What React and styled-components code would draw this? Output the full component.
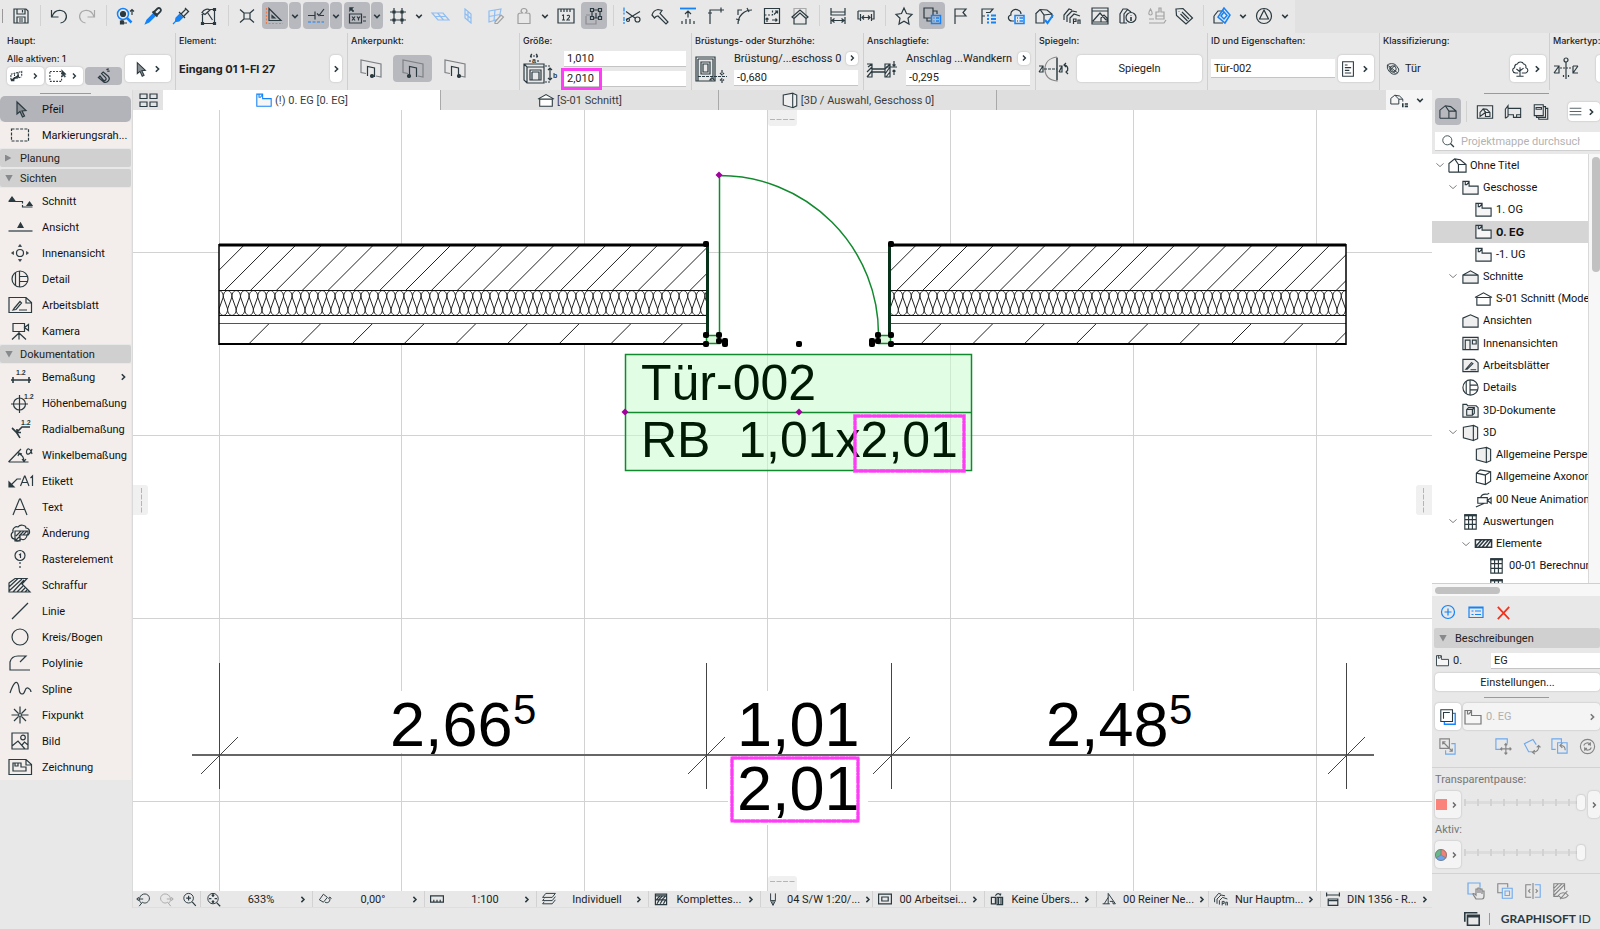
import React, { useState } from "react";
import styled, { createGlobalStyle, css } from "styled-components";

const INK = "#2b3a40";
const BLUE = "#1583f7";
const GREEN = "#118a2e";
const PINK = "#ff3df5";

const icons = {
	save: (
		<>
			<path d="M3 3h12l2 2v12H3z" />
			<path d="M6 3v5h8V3M11.500 4v2.500M6 17v-6h8v6M8 13h4M8 15h4" />
		</>
	),
	undo: <path d="M2.500 4v7h7M3 10.500C4.500 6.500 8 4 12 4.500c5 .7 7 6 4 10-1 1.400-2.500 2.200-4.500 2.500" />,
	redo: <path d="M17.500 4v7h-7M17 10.500C15.500 6.500 12 4 8 4.500c-5 .7-7 6-4 10 1 1.400 2.500 2.200 4.500 2.500" />,
	find: (
		<>
			<g stroke={BLUE} strokeWidth="1.500">
				<circle cx="8" cy="8" r="5.500" />
				<path d="m12 12 4.500 4.500" strokeWidth="2.500" />
			</g>
			<circle cx="8" cy="8" r="2.500" fill={INK} />
			<path d="M17 9V3.500M15 5.500l2-2 2 2M7 14v3h5" />
			<path d="M5.500 15h3v3h-3z" fill={INK} />
		</>
	),
	pick: (
		<>
			<path d="m11 7-7 7-1.500 3.500L6 16l7-7" fill={BLUE} stroke={BLUE} />
			<path d="m9.500 5.500 5 5M11 6l3.500-3.500c2-1.500 4.500 1 3 3L14 9z" strokeWidth="1.800" />
		</>
	),
	inject: (
		<>
			<path d="m9 8-4 4-.5 3.500L8 15l4-4M4.500 15.500 2 18" fill={BLUE} stroke={BLUE} />
			<path d="m8 6 6 6M10 8l5-5M13 10l4-4M14 2l4 4" />
		</>
	),
	modify: (
		<>
			<path d="M3.500 9v8.500h12V3.500H11M2.500 8.500h2M2.500 16.500h2v2h-2zM14.500 16.500h2v2h-2zM14.500 2.500h2v2h-2z" />
			<path d="m13.500 14-5-7.500M3 6.500C5 3 9 2.500 11 4L6 8.500z" />
		</>
	),
	gravity: <path d="M7 7h6v6H7zM3 3.500 7 7M17 3.500 13 7M3 16.500 7 13M17 16.500 13 13" />,
	ruler: (
		<>
			<path d="M4 2.500v12h12z" />
			<path d="M7 9.500v2.500h2.800z" />
			<path d="M1.500 2v15.500H18" stroke="#ee7b4a" strokeDasharray="2 1.500" />
		</>
	),
	snapline: (
		<>
			<path d="M2 9.500h7M9 5.500v8M11 7.500l2 2L18 3M14 9.500h4" />
			<path d="M2 16h16" stroke={BLUE} strokeDasharray="3 1.500" />
		</>
	),
	xy: (
		<>
			<path d="M2.500 8h12v9h-12zM16 11h3M16 15h3" />
			<path d="M5 10.500l3 4M8 10.500l-3 4M10 10.500l1.500 2 1.500-2M11.500 12.500v2" />
			<path d="M2.500 1.500h4l-1.500 1.500 2 2-1 1-2-2-1.500 1.500z" fill={INK} strokeWidth=".5" />
		</>
	),
	hash: (
		<>
			<path d="M6 2v16M14 2v16M2 6h16M2 14h16" />
			<path d="M5 5h2v2H5zM13 5h2v2h-2zM5 13h2v2H5zM13 13h2v2h-2z" fill={INK} />
		</>
	),
	plane: <path d="M2 7h11l6 7H8zM7.500 7l6 7M5 10.500h11" stroke="#8dbdf3" />,
	plane2: <path d="m7 3 6 5v9l-6-5zM10 5.500v9M7 7.500l6 5" stroke="#8dbdf3" />,
	plane3: (
		<>
			<path d="m3 5 12-2-2 10-10 3zM9 4 8 14.500M3 10.500l11-2" stroke="#8dbdf3" />
			<path d="m9 16 6-7 2.500 2-6 6.500H9z" fill="#e8e8e8" stroke="#a2a2a2" />
		</>
	),
	weight: <path d="M4 9c0-2 2-2 4.500-2L7 5.500C7 1.500 13 1.500 13 5.500L11.500 7C15 7 16 7 16 9v8.500H4z" stroke="#9d9d9d" />,
	scale: (
		<>
			<path d="M2 3h16v14H2zM5 3v3M8 3v3M11 3v3M14 3v3" />
			<path d="M6 9.500 7.500 9v5M6 14h3M11 10c1-1.500 3-.5 2.500 1L11 14h3" strokeWidth="1.100" />
		</>
	),
	group: (
		<>
			<path d="M2 10v8h10v-4M2 9h4" stroke="#8b8c92" />
			<path d="M8 4h8v8H8z" />
			<path d="M6.500 2.500h3v3h-3zM14.500 2.500h3v3h-3zM6.500 10.500h3v3h-3zM14.500 10.500h3v3h-3zM12 7v5" fill="#b8b8bf" />
		</>
	),
	cut: (
		<>
			<path d="M2 1.500v7M2 11v7" stroke={BLUE} strokeDasharray="4 1" />
			<path d="M4 5.500 13 12M4 14l14-8.500" />
			<circle cx="15.500" cy="13.500" r="2.500" />
			<circle cx="6" cy="14" r="1.500" />
		</>
	),
	hammer: <path d="M2 9c1-3 3-5 6-5.500l4 1-2 3L18 16l-2 2-8-8-2 .5L4.500 12z" />,
	level: (
		<>
			<path d="M2 2.500h16" stroke={BLUE} strokeWidth="1.800" />
			<path d="M10 4.500v7M7 8l3-3 3 3M4 18v-3M8 18v-5M12 18v-5M16 18v-3" />
		</>
	),
	corner: <path d="M4 18V4h14M2 7h4M15 1.500v5" />,
	fillet: <path d="M4 18C4 10 10 4 18 4M2 13l4 1M13 2l2 4M4 9V4h4" />,
	resize: (
		<>
			<path d="M2.500 2.500h15v15h-15z" />
			<path d="M2.500 9h8V2.500" strokeDasharray="2 1.500" />
			<path d="M13 5h2.500v2.500M15.500 5 12 8.500M5 16v-4M3.500 13.500 5 12l1.500 1.500M10 14h5M13.500 12.500 15 14l-1.500 1.500" />
		</>
	),
	roof: (
		<>
			<path d="M4 11V2.500h12V11" stroke="#aaa" />
			<path d="M2 11 10 4l8 7-2 1.500V18H4v-5.500zM4 12.500 10 7l6 5.500" />
		</>
	),
	span: <path d="M3 2v7h14V2M3 6h14M3 11v7M17 11v7M4 14.500h12M6.500 12.500 4 14.500l2.500 2M13.500 12.500l2.500 2-2.500 2" />,
	span2: <path d="M2 5h16v8h-3M2 5v8h3M4.500 8v7M15.500 8v7M6 11.500h8M8 9.500l-2 2 2 2M12 9.500l2 2-2 2" />,
	star: <path d="m10 2 2.500 5.500 5.500.8-4 4 1 5.700-5-2.800L5 18l1-5.700-4-4 5.500-.8z" />,
	layers: (
		<>
			<path d="M2 2h9v10H2zM5 12v3h5M11 5h4v3" />
			<path d="M9.500 9.500h9v8h-9zM11.500 12h1M14 12h3M11.500 15h1M14 15h3" fill="#b8b8bf" stroke={BLUE} strokeWidth="1.500" />
		</>
	),
	flag: <path d="M5 18V3h11l-3 3.500 3 3.500H5" />,
	flaglist: (
		<>
			<path d="M4 18V3h11l-3 3.500H8M4 10h3" />
			<path d="M9 9.500h2M13 9.500h5M9 13h2M13 13h5M9 16.500h2M13 16.500h5" stroke={BLUE} strokeWidth="2" />
		</>
	),
	cloud: (
		<>
			<path d="M8 15H6c-4 0-5-5-1-6-1-4 4-7 7-5 3 1 3 3 3 4" />
			<path d="M9 9.500h9v8H9zM11 12h1M13.500 12H17M11 15h1M13.500 15H17" stroke={BLUE} strokeWidth="1.500" />
		</>
	),
	housecheck: (
		<>
			<path d="M1.500 8 6 3.500l7 .5 5 4v4M6 3.500 10 9v8H2V8M10 9l8-1" />
			<path d="m11 14 2.500 3L19 9" stroke={BLUE} strokeWidth="2" />
		</>
	),
	villages: <path d="M2 14V9l5-6 3 1M5 16v-6l5-5 5 1M8 17v-5l4-4 6 2M11.500 18v-5h2.500v2.500h-2.500M16 18v-4h2v4" />,
	picture: <path d="M2 2h16v16H2zM2 5h16M3 15l7-8 6 7M11 16v-4l3-3 3 3v4zM2 16h16" />,
	houseinfo: (
		<>
			<path d="M2 17V8l3-5h4l4 3M6 17V8l4-5M2 17h7" />
			<circle cx="13" cy="11.500" r="5" />
			<path d="M13 9v.5M13 11v4" strokeWidth="1.600" />
		</>
	),
	paint: <path d="M4.500 3C2 7 2.500 9 4.500 9s2.500-2 0-6zM10 10h8v-4h-3V2h-2v4h-3zM10 10v3h8v-3M3 13h5M3 17h15l2-3" stroke="#a2a2a2" />,
	tag: <path d="m2 3 7-.5L18.500 12 12 18 2.500 9.500zM5 5.500v.5M8 6l7 7M6.500 8l7 7" />,
	suite: (
		<>
			<path d="M2 10 6 5h6M2 10v7h9" />
			<path d="m12 2 6 7-5 8-7-6zM12 6l3 3.500-3 3.500-3-3z" stroke={BLUE} strokeWidth="1.500" />
		</>
	),
	circleTri: (
		<>
			<circle cx="10" cy="10" r="7.500" />
			<path d="m10 4 4.500 9h-9z" />
		</>
	),
	chevDown: <path d="m6.500 8.500 3.500 3.500 3.500-3.500" strokeWidth="2" />,
	chevRight: <path d="m8.500 6.500 3.500 3.500-3.500 3.500" strokeWidth="2" />,
	treeDown: <path d="m5.500 8 4.500 4 4.500-4" stroke="#7b7b7b" />,

	arrow: <path d="M7 3v12l3-2.500 2.500 5.500 2-1-2.500-5 4-.5z" fill="#8b9094" />,
	marquee: <path d="M1.500 4h17v12h-17z" strokeDasharray="3 1.300" />,
	section: (
		<>
			<path d="M-1.500 10.500h14v2M12.500 14v2h10" />
			<path d="M-.5 9.500 2 6l2.500 3.500zM17 14.500l2.500-3.500 2.500 3.500z" fill={INK} />
		</>
	),
	elevation: (
		<>
			<path d="M-1.500 14h24" />
			<path d="m8 10.500 2.500-4.500 2.500 4.500z" fill={INK} />
		</>
	),
	interior: (
		<>
			<circle cx="10" cy="10" r="3.500" />
			<path d="m8.500 3.500 1.500-2 1.500 2zM8.500 16.500l1.500 2 1.500-2zM3.500 8.500l-2 1.500 2 1.500zM16.500 8.500l2 1.500-2 1.500z" fill={INK} strokeWidth=".7" />
		</>
	),
	detail: (
		<>
			<circle cx="10" cy="10" r="8" />
			<path d="M5.500 3.500v13M9.500 2v16M9.500 7.500h8M9.500 12.500h8" />
		</>
	),
	sheet: (
		<>
			<path d="M-1 2.500h17l5.500 5v10H-1zM16 2.500V8h5.500" />
			<path d="m4 13.500 6-7 1.500 1.500-5.500 6.500-3 .5zM9 15h8" />
		</>
	),
	camera: <path d="M3 2.500h11.500v8H3zM14.500 6.500l4-3v6zM9 10.500v8M9 12 2 18.500M9 12l7 6.500" />,
	dim: (
		<>
			<path d="M1 13h20M3 10v6M19 10v6" strokeWidth="1.600" />
			<text x="6" y="8">1.2</text>
		</>
	),
	dimH: (
		<>
			<circle cx="9.500" cy="11" r="6" />
			<path d="M9.500 2v18M1 11h17" />
			<text x="14" y="5.500">1.2</text>
		</>
	),
	dimR: (
		<>
			<path d="M2 9c4 3 6 6 8 10M7 13l5-5h8M7 10v3.500h4" strokeWidth="1.600" />
			<text x="11" y="6">1.2</text>
		</>
	),
	dimA: (
		<>
			<path d="M-1.500 17h20M-1.500 17 11 4M9 9c4 1 5 5 5 8M8 11l1-3 3 1M12 14l2 2.500L16 14" />
			<path d="M22 4c-2 7-6 6-5.500 2.500C17 2.500 20.500 3 22 9" />
		</>
	),
	label: (
		<>
			<path d="M-1 11v5h5z" fill={INK} />
			<path d="M1 14l6-6h4" />
			<path d="m10.500 15 4-10h.5l4 10M12 11.500h5.500M20.500 7l2-2v10" />
		</>
	),
	text: <path d="m3 18 6.500-16h1L17 18M5.500 12.500h9" />,
	change: (
		<>
			<path d="M5 16c-4 0-5-5-2-7-1-4 3-6 5-5 2-3 8-2 8 1 4 0 5 6 1 7 0 3-3 6-6 4-2 3-6 2-6 0z" />
			<path d="M5 8h13v4h-8v6H5zM6 13l5-5M9 13l5-5M13 12l4-4M6 17l4-4" />
		</>
	),
	grid1: (
		<>
			<circle cx="10" cy="6.500" r="5" />
			<path d="m9 6 1.500-1v4" />
			<path d="M10 13v6" strokeDasharray="2 2" />
		</>
	),
	fill: <path d="m-1 8 6-4.500h12L12 9l8 8H-1zM-1 12 8 3.500M-1 16 12 4M3 17 14 5M7 17l6-6M11 17l4-4M15 17l2-2" />,
	line: <path d="m2 18 16-16" />,
	circle: <circle cx="10" cy="10" r="8" />,
	poly: <path d="M20 17H0v-8c1-4 4-6 8-6h8l-6 6" />,
	spline: <path d="M0 14C3 5 6 1 8 5s0 10 4 10 2-7 6-6c2 1 3 2 3 4" />,
	fix: (
		<>
			<circle cx="10" cy="10" r="1.500" />
			<path d="M10 1.500V8M10 12v6.500M1.500 10H8M12 10h6.500M4 4l4.500 4.500M11.500 11.500 16 16M16 4l-4.500 4.500M8.500 11.500 4 16" />
		</>
	),
	image: (
		<>
			<path d="M2 2h16v16H2zM2 15l6-5 7 8M12 14l2.500-3L18 14" />
			<circle cx="13" cy="6.500" r="2.300" />
		</>
	),
	drawing: (
		<>
			<path d="M-1 2.500h17l5.500 5v10H-1zM16 2.500V8h5.500" />
			<path d="M3 6h8v4h5v4H3zM5 6v3h3V6" />
		</>
	),

	storey: <path d="M2 3.500h6.500v5H18V17H2zM4.500 3.500V7H6l2.500-3" fill="#f6f6f6" />,
	house: <path d="M1 17V8l6-5 6 1 6 5v8h-8V9l8 0M11 17H1M7 3l4 6" fill="none" />,
	houseList: (
		<>
			<path d="M1 15V8l5-4 6 1 4 4v3M6 4l5 5v6H1M11 9h5" />
			<path d="M16 14v5M18.500 15h4M18.500 18h4" strokeWidth="2" />
		</>
	),
	gable: <path d="M2 8.500 10 4l8 4.500V17H2zM2 8.500h16" fill="#efefef" />,
	gableWhite: <path d="M1 9 10 4l9 5M3 9h14v8H3z" fill="#fff" />,
	gableOpen: <path d="M2 7.500 10 4l8 3.500V17H2z" fill="#efefef" />,
	rooms: <path d="M2 3.500h16v13H2zM4.500 16.500v-10h5v10M12 6.500h4v4h-4z" fill="#efefef" />,
	sheetSmall: <path d="M2 3.500h12l4 3.500v9.500H2zM5 14l6-7 1.500 1-6 6zM10 14.500h6" fill="#efefef" />,
	doc3d: <path d="M2 3.500h4l1 1.500h9l2 2v10H2zM6 9l2-2h6v6l-2 2H6zM6 9h6v6M12 9l2-2" fill="#efefef" />,
	box: <path d="M2.500 4.500 13 2.500v16l-10.500-3zM13 2.500l4.500 2v12L13 18.500" fill="#efefef" />,
	cube: <path d="M2.500 6.500 6.500 3 17.500 5v10L12 18.500 2.500 16zM2.500 6.500 12 8.500v10M12 8.500 17.500 5" fill="#fff" />,
	cam: <path d="M4 8h10v6H4zM14 11l4-3v6zM7 8c1-4 4-4 7-3.500l2-1M2 18l9-4" />,
	table: (
		<>
			<path d="M4 3h12v15H4zM4 8h12M4 13h12M8 4v14M12 4v14" />
			<path d="M4 3h12v1H4z" fill={INK} />
		</>
	),
	hatch: <path d="M1.500 6h17v8h-17zM2 13l6-7M5 13.500 11.500 6M9 13.500 15.500 6M13 13.500l5-7" strokeWidth="1.600" />,
	frame: <path d="M1.500 3h17v14h-17zM4.500 15v-4.500l3.500-4 4 .5 3.500 3.500V15h-5v-4.500zM8 6.500l2.500 4h5" />,
	layout: <path d="M1.500 17V7l3-4v12l-3 2M4.500 6h14v10h-8v-3H4.500M14 16v-3h4" />,
	books: <path d="M2.500 2h10v12h-10zM4.500 5h6v2h-6zM12.500 4H15v12H5v-2M15 6h2.500v12h-10v-2" />,
	search: (
		<>
			<circle cx="9" cy="9" r="6.500" />
			<path d="m13.500 13.500 5 5" strokeWidth="1.800" />
		</>
	),
	plus: (
		<>
			<circle cx="10" cy="10" r="6.500" />
			<path d="M10 6.500v7M6.500 10h7" />
		</>
	),
	list: <path d="M3 5h14v10.500H3zM3 6h14M5.500 9h2M9 9h6M5.500 12.500h2M9 12.500h6" />,
	cross: <path d="m4 4 12 13M16 4 4 17" strokeWidth="1.800" />,
	trace: (
		<>
			<path d="M6 15v3h12V6h-3" stroke={BLUE} strokeWidth="1.500" />
			<path d="M2 2h13v13H2zM5 12V5h7" />
		</>
	),
	swap: (
		<>
			<path d="M14 7h4v11H8v-4" stroke="#6ea9ee" />
			<path d="M2 2h10v10H2zM5 5l10 10M5 8V5h3M15 12v3h-3" stroke="#848484" />
		</>
	),
	move: (
		<>
			<path d="M8 13H2V2h12v5" stroke="#6ea9ee" />
			<path d="M12.500 7v11M7 12.500h11M11 8.500 12.500 7 14 8.500M11 16.500l1.500 1.500 1.500-1.500M8.500 11 7 12.500 8.500 14M16.500 11l1.500 1.500-1.500 1.500" stroke="#848484" />
		</>
	),
	rotate: (
		<>
			<path d="M11 15.500H7L2.500 7l9-4.500L15 8" stroke="#6ea9ee" />
			<path d="M17.500 9c1 4-2 7-6 7M15.500 11l2-2 2 2M13.500 14l-2.500 2 2.500 2" stroke="#848484" />
		</>
	),
	back: (
		<>
			<path d="M6 13H2V2h10v4M8 6h10v11H8z" stroke="#6ea9ee" />
			<path d="M16 14c0-4-2-5-5-5M13 6.500 10.500 9l2.500 2.500" stroke="#848484" />
		</>
	),
	sync: (
		<>
			<circle cx="10" cy="10" r="7.500" />
			<path d="M6 9c1-3 5-4 7-1V5.500M13 8h-2.500M14 11c-1 3-5 4-7 1v2.500M7 12h2.500" />
		</>
	),
	hand: (
		<>
			<path d="M7 13H2V2h12v4" stroke="#6ea9ee" />
			<path d="M10 18c-1-2-3-4-3-5s2 0 3 1V8h2v4-5h2v5-4h2v5-3h2v5c0 2-1 3-2 3z" />
		</>
	),
	copy: (
		<>
			<path d="M7 12H2V2h11v4" />
			<path d="M7 7h11v11H7zM10 10h5v5h-5z" stroke="#6ea9ee" />
		</>
	),
	mirrorSplit: (
		<>
			<path d="M8 3H2v14h6" />
			<path d="M12 3h6v14h-6" stroke="#6ea9ee" />
			<path d="M10 1v18M7 8l-2 2 2 2M13 8l2 2-2 2" />
		</>
	),
	eyeHatch: <path d="M14 9V2H2v14h5M2 7l5-5M2 11l9-9M2 15 14 3M7 15c3-4 8-4 11 0-3 4-8 4-11 0zM17 10l-8 9" />,
	windows: <path d="M2 13V3h14M5 6h13v11H5zM5 7.500h13" strokeWidth="1.800" />,
	zoomBack: <path d="M7 15.500c-3-2-4-7 0-10.500 6-4 12 2 9 7-2 3-5 4-8 2L4 19M1 10h8M3.500 7.500 1 10l2.500 2.500" />,
	zoomFwd: <path d="M13 15.500c3-2 4-7 0-10.500-6-4-12 2-9 7 2 3 5 4 8 2l4 5M19 10h-8M16.500 7.500 19 10l-2.500 2.500" />,
	zoomIn: (
		<>
			<circle cx="9.500" cy="9" r="6" />
			<path d="m14 13.500 4.500 5M9.500 6v6M6.500 9h6" strokeWidth="1.500" />
		</>
	),
	zoomFit: (
		<>
			<circle cx="10" cy="9.500" r="6.500" />
			<path d="M14.500 14.500 19 19M10 4.500v3M10 11.500v3M5 9.500h3M12 9.500h3M8.500 6 10 4.500 11.500 6M8.500 13l1.500 1.500 1.500-1.500" strokeWidth="1.600" />
		</>
	),
	tilt: <path d="m3 11 5-7 5 4-5 6zM10 14c4 2 7-1 6-6M14 9.500 16 7.500l2 2" />,
	rule: <path d="M2 6h16v8H2zM6 14v-3M10 14v-3M14 14v-3" strokeWidth="1.500" />,
	stack: <path d="m6 3-4 5h12l4-5zM4 9.500 2 12h12l4-5M4 13.500 2 16h12l4-5" />,
	structure: <path d="M3 4h14v13H3zM3 4h14v2H3zM4 11l5-5M7 11l5-5M11 11l5-5M3 11h14M5 16l3-5M9 16l3-5M13 16l3-5" strokeWidth="1.500" />,
	pen: <path d="M7 3v9l3 6 3-6V3M10 12v5M7 12h6" />,
	dual: <path d="M2 4h16v12H2zM6 7.500h8v5H6z" strokeWidth="1.500" />,
	override: <path d="M3 8h5v8H3zM10 8h7v9h-7zM12 8v9M15 8v9M8 6c2-4 5-3 6-1l1-2" strokeWidth="1.500" />,
	reno: <path d="M2 16h9M9 16V3l9 13h-3v-3h-4M9 8l-5 8" />,
	dims: <path d="M2 5h16M2 2v5M18 2v5M4 10h12v8H4zM4 12h12" strokeWidth="1.500" />,

	net: (
		<>
			<path d="M1 14V8l12-3v5M1 14l12-3M5 8v6M9 6v6" strokeDasharray="2 1" />
			<path d="M1 15l8-5M1 15h3v-3M9 8v4" strokeWidth="1.800" />
		</>
	),
	select: (
		<>
			<path d="M1 5h13v11H1z" strokeDasharray="2 1.500" />
			<path d="m14 3 5 5-2 .5 1.500 2-1 1-1.500-2-1 1.500z" fill={INK} strokeWidth=".5" />
		</>
	),
	magnet: <path d="m3 12 6 5c5 3 10-3 6-7l-6-5-2 2 5 5c2 2-1 5-3 3L5 10zM13 2l3-1M14 4l3 0" strokeWidth="1.600" />,
	doorSize: (
		<>
			<path d="M1 12h20v19H4l-3-3zM1 12l3 3h17M4 15v16M7 18h11v10H7zM9 20h7v8M9 20v8" />
			<path d="M7 4h8M9 2 7 4l2 2M13 2l2 2-2 2M7 8v3M15 8v3M22 14h6M22 30h6" strokeDasharray="2 1" />
			<path d="M27 16v12M25 18l2-2 2 2M25 26l2 2 2-2" />
			<text x="9" y="11">a</text>
			<text x="30" y="26">b</text>
		</>
	),
	sill: (
		<>
			<path d="M1 2h19v24H1zM3 4h15v20M3 4v22M6 7h9v12H6zM8 9h5v8H8z" />
			<path d="M3 21.500h29M27 15v5M25 18l2 2 2-2M27 28v-4M25 25.500l2-2 2 2M15 25l2-2.500 2 2.500z" strokeDasharray="3 1" />
		</>
	),
	reveal: (
		<>
			<path d="M0 6h5v13H0M1 9l4-3M0 14l5-5M0 19l5-6M18 6h5v13h-5zM18 11l5-5M18 16l5-7M19 19l4-5" />
			<path d="M5 11h13M5 14h13" strokeWidth="1.600" />
			<path d="M19 9h11M27 3v5M25.500 6.500 27 8l1.500-1.500M27 17v-5M25.500 13.500 27 12l1.500 1.500" />
		</>
	),
	flip: (
		<>
			<path d="M18 -1v24C9 22 6 17 6 11S10 0 18-1" stroke="#888" />
			<path d="M0 8h4v6H0M0 14l4-6M20 8h3v6h-3M20 14l3-6M18 0v22" />
			<path d="M5 11h13" strokeDasharray="3 1" />
			<path d="M25 7c4 0 5 5 2 7M27 5l-2 2 2 2M29 12l-2 2 2 2" />
		</>
	),
	classify: (
		<>
			<path d="M3 5c4-3 10-2 12 2l2 3c1 5-4 8-8 6C5 14 4 11 3 9zM3 5l13 10M6 12l7-7M5 8l8 8" />
			<circle cx="10" cy="10" r="4" />
		</>
	),
	marker: (
		<>
			<circle cx="13" cy="2" r="2" />
			<path d="M13 4v17M1 8h5v7H1M1 15l5-7M20 8h5M20 8v7h5M20 15l5-7" />
			<path d="M7 10h12M10.500 17v3M15.500 17v3" strokeDasharray="2 1" />
		</>
	),
	tree: <path d="M10 18V8M6 18h8M10 13 6 10M10 12l4-3M8 14.500H5c-4-1-4-5-1-6 0-3 2-4 3-4 1-3 6-3 7 0 2 0 3 2 2.500 4 3 1 3 5 0 6H12" />,
	doc: <path d="M4 2h12v16H4zM6.500 5.500h3M6.500 8.500h7M6.500 11.500h5M6.500 14.500h7" />,
	quad: <path d="M2 4h7v4.500H2zM12 4h7v4.500h-7zM2 12h7v4.500H2zM12 12h7v4.500h-7z" />,
	burger: <path d="M1 5h18M1 10h18M1 15h18" />,
};

function Icon({ name, size = 20, width = 20, height = 20, color = INK }) {
	const scale = width === 20 ? size / 20 : 1;
	return (
		<Glyph
			width={width * scale}
			height={height * scale}
			viewBox={`0 0 ${width} ${height}`}
			stroke={color}
			aria-hidden="true"
		>
			{icons[name]}
		</Glyph>
	);
}

function AnchorIcon({ dot }) {
	return (
		<Glyph width="22" height="22" viewBox="0 0 22 22" stroke={INK}>
			<path d="M6 15.500l-5-1V2l20 4v13l-5-1" stroke="#7d8185" />
			<path d="M7.500 18V8.500l7 1.500v9" />
			<circle cx={dot} cy="18" r="1.500" fill={INK} />
		</Glyph>
	);
}

const mainTools = [
	["save", "|", "undo", ["redo", "#a8a8a8"], "|", "find", "pick", "inject", "modify", "|", "gravity"],
	["*ruler", "*chevDown", "*snapline", "*chevDown", "*xy", "*chevDown", "hash", "chevDown"],
	["plane", "plane2", "plane3", "weight", "chevDown", "scale", "*group", "|"],
	["cut", "hammer", "level", "corner", "fillet", "resize", "roof", "|", "span", "span2", "|"],
	["star", "*layers", "flag", "flaglist", "cloud", "housecheck", "villages", "picture", "houseinfo", "paint", "tag"],
	["|", "suite", "chevDown", "circleTri", "chevDown"],
].flat();

const viewTools = [
	["section", "Schnitt"],
	["elevation", "Ansicht"],
	["interior", "Innenansicht"],
	["detail", "Detail"],
	["sheet", "Arbeitsblatt"],
	["camera", "Kamera"],
];

const docTools = [
	["dim", "Bemaßung", true],
	["dimH", "Höhenbemaßung"],
	["dimR", "Radialbemaßung"],
	["dimA", "Winkelbemaßung"],
	["label", "Etikett"],
	["text", "Text"],
	["change", "Änderung"],
	["grid1", "Rasterelement"],
	["fill", "Schraffur"],
	["line", "Linie"],
	["circle", "Kreis/Bogen"],
	["poly", "Polylinie"],
	["spline", "Spline"],
	["fix", "Fixpunkt"],
	["image", "Bild"],
	["drawing", "Zeichnung"],
];

const tree = [
	[0, "house", "Ohne Titel", true],
	[1, "storey", "Geschosse", true],
	[2, "storey", "1. OG"],
	[2, "storey", "0. EG"],
	[2, "storey", "-1. UG"],
	[1, "gable", "Schnitte", true],
	[2, "gableWhite", "S-01 Schnitt (Modell)"],
	[1, "gableOpen", "Ansichten"],
	[1, "rooms", "Innenansichten"],
	[1, "sheetSmall", "Arbeitsblätter"],
	[1, "detail", "Details"],
	[1, "doc3d", "3D-Dokumente"],
	[1, "box", "3D", true],
	[2, "box", "Allgemeine Perspektive"],
	[2, "cube", "Allgemeine Axonometrie"],
	[2, "cam", "00 Neue Animation"],
	[1, "table", "Auswertungen", true],
	[2, "hatch", "Elemente", true],
	[3, "table", "00-01 Berechnung"],
];

const quickOptions = [
	["zoomFit", "633%"],
	["tilt", "0,00°"],
	["rule", "1:100"],
	["stack", "Individuell"],
	["structure", "Komplettes..."],
	["pen", "04 S/W 1:20/..."],
	["dual", "00 Arbeitsei..."],
	["override", "Keine Übers..."],
	["reno", "00 Reiner Ne..."],
	["villages", "Nur Hauptm..."],
	["dims", "DIN 1356 - R..."],
];

function MainToolbar() {
	return (
		<Toolbar>
			<Tools>
				<Grip />
				{mainTools.map((tool, i) => {
					if (tool === "|") return <Separator key={i} />;
					const [raw, color] = Array.isArray(tool) ? tool : [tool];
					const active = raw[0] === "*";
					const name = raw.replace("*", "");
					return (
						<ToolButton key={i} $active={active} $slim={name === "chevDown"} aria-label={name}>
							<Icon name={name} color={color} size={name === "chevDown" ? 16 : 20} />
						</ToolButton>
					);
				})}
			</Tools>
		</Toolbar>
	);
}

function InfoBox() {
	const [size, setSize] = useState({ width: "1,010", height: "2,010" });
	const [sill, setSill] = useState("-0,680");
	const [reveal, setReveal] = useState("-0,295");
	const [id, setId] = useState("Tür-002");
	const [anchor, setAnchor] = useState(1);
	return (
		<InfoBar>
			<InfoSection $first>
				<InfoTitle>Haupt:</InfoTitle>
				<InfoBody>
					<Stack $gap={2}>
						<InfoTitle as="span">Alle aktiven: 1</InfoTitle>
						<Inline>
							<Chip aria-label="Geometrie">
								<Icon name="net" size={18} />
								<Icon name="chevRight" size={14} />
							</Chip>
							<Chip aria-label="Auswahl">
								<Icon name="select" size={18} />
								<Icon name="chevRight" size={14} />
							</Chip>
							<Chip $active aria-label="Magnet">
								<Icon name="magnet" size={16} />
							</Chip>
						</Inline>
					</Stack>
					<Card $width={46} aria-label="Pfeil">
						<Icon name="arrow" size={18} />
						<Icon name="chevRight" size={16} />
					</Card>
				</InfoBody>
			</InfoSection>
			<InfoSection>
				<InfoTitle>Element:</InfoTitle>
				<InfoBody>
					<Strong>Eingang 01 1-Fl 27</Strong>
					<Card $width={12} aria-label="Element wählen">
						<Icon name="chevRight" size={16} />
					</Card>
				</InfoBody>
			</InfoSection>
			<InfoSection>
				<InfoTitle>Ankerpunkt:</InfoTitle>
				<InfoBody>
					{[["Links", 12], ["Mitte", 7], ["Rechts", 15]].map(([name, dot], i) => (
						<AnchorButton key={name} $active={anchor === i} onClick={() => setAnchor(i)} aria-label={name}>
							<AnchorIcon dot={dot} />
						</AnchorButton>
					))}
				</InfoBody>
			</InfoSection>
			<InfoSection>
				<InfoTitle>Größe:</InfoTitle>
				<InfoBody>
					<Icon name="doorSize" width={35} height={33} />
					<Stack $gap={4} $grow>
						<Field
							aria-label="Breite"
							value={size.width}
							onChange={(e) => setSize({ ...size, width: e.target.value })}
						/>
						<FieldWrap>
							<Field
								aria-label="Höhe"
								value={size.height}
								onChange={(e) => setSize({ ...size, height: e.target.value })}
							/>
							<Highlight />
						</FieldWrap>
					</Stack>
				</InfoBody>
			</InfoSection>
			<InfoSection>
				<InfoTitle>Brüstungs- oder Sturzhöhe:</InfoTitle>
				<InfoBody>
					<Icon name="sill" width={33} height={28} />
					<Stack $gap={5} $grow>
						<Choice>
							<span>Brüstung/...eschoss 0</span>
							<Mini aria-label="Bezug wählen">
								<Icon name="chevRight" size={14} />
							</Mini>
						</Choice>
						<Field aria-label="Brüstungshöhe" value={sill} onChange={(e) => setSill(e.target.value)} />
					</Stack>
				</InfoBody>
			</InfoSection>
			<InfoSection>
				<InfoTitle>Anschlagtiefe:</InfoTitle>
				<InfoBody>
					<Icon name="reveal" width={33} height={22} />
					<Stack $gap={5} $grow>
						<Choice>
							<span>Anschlag ...Wandkern</span>
							<Mini aria-label="Anschlag wählen">
								<Icon name="chevRight" size={14} />
							</Mini>
						</Choice>
						<Field aria-label="Anschlagtiefe" value={reveal} onChange={(e) => setReveal(e.target.value)} />
					</Stack>
				</InfoBody>
			</InfoSection>
			<InfoSection>
				<InfoTitle>Spiegeln:</InfoTitle>
				<InfoBody>
					<Icon name="flip" width={35} height={22} />
					<Card $grow>Spiegeln</Card>
				</InfoBody>
			</InfoSection>
			<InfoSection>
				<InfoTitle as="label" htmlFor="element-id">
					ID und Eigenschaften:
				</InfoTitle>
				<InfoBody>
					<Field id="element-id" $tall value={id} onChange={(e) => setId(e.target.value)} />
					<Card $width={36} aria-label="Eigenschaften">
						<Icon name="doc" size={18} />
						<Icon name="chevRight" size={16} />
					</Card>
				</InfoBody>
			</InfoSection>
			<InfoSection>
				<InfoTitle>Klassifizierung:</InfoTitle>
				<InfoBody>
					<Classified>
						<Icon name="classify" size={16} />
						Tür
					</Classified>
					<Card $width={36} aria-label="Klassifizierung wählen">
						<Icon name="tree" size={18} />
						<Icon name="chevRight" size={16} />
					</Card>
				</InfoBody>
			</InfoSection>
			<InfoSection $last>
				<InfoTitle>Markertyp:</InfoTitle>
				<InfoBody>
					<Icon name="marker" width={40} height={22} />
					<Card $width={80} aria-label="Marker wählen" />
				</InfoBody>
			</InfoSection>
		</InfoBar>
	);
}

function Toolbox() {
	const [tool, setTool] = useState("Pfeil");
	const row = ([icon, name, more]) => (
		<PaletteTool key={name} $active={tool === name} onClick={() => setTool(name)}>
			<Icon name={icon} />
			<span>{name}</span>
			{more && <Icon name="chevRight" size={16} />}
		</PaletteTool>
	);
	return (
		<Palette>
			<PaletteGrip $width={51} />
			{row(["arrow", "Pfeil"])}
			{row(["marquee", "Markierungsrah..."])}
			<PaletteHeader $closed>Planung</PaletteHeader>
			<PaletteHeader>Sichten</PaletteHeader>
			{viewTools.map(row)}
			<PaletteHeader>Dokumentation</PaletteHeader>
			{docTools.map(row)}
		</Palette>
	);
}

const range = (from, to, step) => {
	const out = [];
	for (let v = from; v <= to; v += step) out.push(v);
	return out;
};

// one soft-insulation loop: arc on top, leaning leg, arc at the bottom, leg back up
const loop = (x) =>
	`M${x - 4.3} 297C${x - 4.3} 288.500 ${x + 4.3} 288.500 ${x + 4.3} 297L${x} 309` +
	`C${x} 317.500 ${x + 8.6} 317.500 ${x + 8.6} 309L${x + 4.3} 297`;

function Wall({ id, x, width }) {
	const right = x + width;
	return (
		<g>
			<clipPath id={id}>
				<rect x={x} y="245" width={width} height="99" />
			</clipPath>
			<rect x={x} y="245" width={width} height="99" fill="#fff" />
			<g clipPath={`url(#${id})`} stroke="#222" fill="none">
				{range(147.5, 1350, 25.85).map((v) => (
					<path key={v} d={`M${v} 290l44-44`} />
				))}
				{range(197, 1350, 51.7).map((v) => (
					<path key={v} d={`M${v} 344l21-21`} />
				))}
				{range(219, 1350, 8.6).map((v) => (
					<path key={v} d={loop(v)} />
				))}
			</g>
			<path d={`M${x} 290.500H${right}M${x} 315.500H${right}`} stroke="#111" />
			<path d={`M${x} 323.500H${right}`} stroke="#555" />
			<path d={`M${x} 245H${right}`} stroke="#000" strokeWidth="3" />
			<path d={`M${x} 344H${right}`} stroke="#000" strokeWidth="2" />
		</g>
	);
}

function PinkFrame({ x, y, width, height }) {
	return (
		<g fill="none" stroke={PINK}>
			<rect x={x} y={y} width={width} height={height} strokeWidth="3" />
			<rect
				x={x}
				y={y}
				width={width}
				height={height}
				strokeWidth="4"
				strokeDasharray="5 1 2 1 7 2 3 1 4 1"
				opacity=".4"
			/>
		</g>
	);
}

const handles = [
	[706, 244], [891, 244], [706, 335], [719, 335], [706, 344], [719, 341], [725, 341], [725, 344],
	[799, 344], [872, 341], [872, 344], [878, 335], [878, 341], [891, 335], [891, 344],
];

function FloorPlan() {
	return (
		<Plan viewBox="133 110 1299 781" preserveAspectRatio="xMidYMid slice">
			<g stroke="#d2d2d2">
				{[219, 401, 584, 767, 950, 1133, 1316].map((x) => (
					<path key={x} d={`M${x + 0.5} 110V891`} />
				))}
				{[252, 435, 618, 801].map((y) => (
					<path key={y} d={`M132 ${y + 0.5}H1433`} />
				))}
			</g>

			<Wall id="wall-left" x={219} width={488} />
			<Wall id="wall-right" x={891} width={455} />
			<path d="M219 244v101M1346 244v101" stroke="#000" strokeWidth="1.500" />
			<path d="M707.500 245v90M889.500 245v90" stroke="#08331a" strokeWidth="3" />

			<g fill="none" stroke={GREEN} strokeWidth="1.500">
				<path d="M706.500 335.500h13v8h-13zM878.500 335.500h12v8h-12z" fill="#dcf9de" />
				<path d="M719.500 176v159M719.500 175.500A159 159 0 0 1 878.500 335" />
			</g>
			<path d="M719 335v6h6v3M878 335v6h-6v3" fill="none" stroke="#000" strokeWidth="2" />
			{handles.map(([x, y]) => (
				<rect key={`${x}-${y}`} x={x - 3} y={y - 3} width="6" height="6" rx="2" />
			))}

			<g stroke={GREEN} strokeWidth="1.500">
				<rect x="625.500" y="354.500" width="346" height="116" fill="rgba(200, 252, 206, .55)" />
				<path d="M625.500 412.500h346" />
			</g>
			<DrawText x="641" y="400" $size={50} fill="#001a04">Tür-002</DrawText>
			<DrawText x="641" y="457" $size={50} fill="#001a04">RB{"\u00a0\u00a0"}1,01x2,01</DrawText>
			{[[719, 175], [625, 412], [799, 412]].map(([x, y]) => (
				<path key={x} d={`M${x - 3.500} ${y}l3.500-3.500 3.500 3.500-3.500 3.500z`} fill="#a3009f" />
			))}

			<path d="M384 691h155v62H384zM728 691h140v134H728zM1040 691h155v62h-155z" fill="#fff" />
			<path d="M192 755H1374" stroke="#666" strokeWidth="2" />
			<g stroke="#444">
				{[219, 706, 891, 1346].map((x) => (
					<path key={x} d={`M${x + 0.5} 663v126M${x - 18} 774l37-37`} />
				))}
			</g>
			<DrawText x="390" y="746" $size={63}>2,66</DrawText>
			<DrawText x="513" y="724" $size={42}>5</DrawText>
			<DrawText x="737" y="746" $size={63}>1,01</DrawText>
			<DrawText x="737" y="810" $size={63}>2,01</DrawText>
			<DrawText x="1046" y="746" $size={63}>2,48</DrawText>
			<DrawText x="1169" y="724" $size={42}>5</DrawText>

			<PinkFrame x={855} y={416} width={109} height={55} />
			<PinkFrame x={732} y={758} width={126} height={63} />

			<g fill="#f0f0f0">
				<rect x="768" y="107" width="29" height="19" rx="3" />
				<rect x="768" y="876" width="29" height="19" rx="3" />
				<rect x="128" y="485" width="20" height="30" rx="3" />
				<rect x="1416" y="485" width="20" height="30" rx="3" />
			</g>
			<path
				d="M770 119.500h25M770 881.500h25M141.500 488v25M1423.500 488v25"
				stroke="#f3a273"
				strokeDasharray="5 1.500"
			/>
		</Plan>
	);
}

function Navigator() {
	const [selected, setSelected] = useState("0. EG");
	return (
		<SidePanel>
			<PaletteGrip $width={65} />
			<NavTabs>
				<NavTab $active aria-label="Projektmappe"><Icon name="house" size={18} /></NavTab>
				<Separator />
				<NavTab aria-label="Ausschnitte"><Icon name="frame" size={18} /></NavTab>
				<NavTab aria-label="Layoutbuch"><Icon name="layout" size={18} /></NavTab>
				<NavTab aria-label="Publisher"><Icon name="books" size={18} /></NavTab>
				<MenuButton aria-label="Menü">
					<Icon name="burger" size={13} />
					<Icon name="chevRight" size={16} />
				</MenuButton>
			</NavTabs>
			<SearchRow>
				<Icon name="search" size={14} />
				<SearchInput aria-label="Projektmappe durchsuchen" placeholder="Projektmappe durchsuchen" />
			</SearchRow>
			<TreeArea>
				<TreeList>
					{tree.map(([level, icon, name, open]) => (
						<TreeRow
							key={name}
							$level={level}
							$selected={selected === name}
							onClick={() => setSelected(name)}
						>
							<Twist>{open && <Icon name="treeDown" size={16} />}</Twist>
							<Icon name={icon} size={19} />
							<span>{name}</span>
						</TreeRow>
					))}
					<TreeRow $level={3} aria-label="00-02">
						<Twist />
						<Icon name="table" size={19} />
					</TreeRow>
				</TreeList>
				<ScrollTrack>
					<ScrollThumb />
				</ScrollTrack>
			</TreeArea>
			<ScrollTrackH>
				<ScrollThumbH />
			</ScrollTrackH>
			<Actions>
				<IconButton aria-label="Neu"><Icon name="plus" color={BLUE} /></IconButton>
				<IconButton aria-label="Eigenschaften"><Icon name="list" color={BLUE} /></IconButton>
				<IconButton aria-label="Löschen"><Icon name="cross" color="#f3301c" size={19} /></IconButton>
			</Actions>
			<PaletteHeader $side>Beschreibungen</PaletteHeader>
			<DescRow>
				<Icon name="storey" size={15} />
				<label htmlFor="storey-name">0.</label>
				<Field id="storey-name" defaultValue="EG" />
			</DescRow>
			<Settings>Einstellungen...</Settings>
			<PaletteGrip $width={65} $loose />
			<TraceRow>
				<Card $width={26} aria-label="Transparentpause"><Icon name="trace" size={18} /></Card>
				<TraceTarget disabled>
					<Icon name="storey" size={20} color="#777" />
					<span>0. EG</span>
					<Icon name="chevRight" size={16} color="#777" />
				</TraceTarget>
			</TraceRow>
			<TraceTools>
				<IconButton aria-label="Wechseln"><Icon name="swap" size={19} color="#848484" /></IconButton>
				<Spacer />
				<IconButton aria-label="Verschieben"><Icon name="move" size={19} /></IconButton>
				<IconButton aria-label="Drehen"><Icon name="rotate" size={19} /></IconButton>
				<IconButton aria-label="Zurücksetzen"><Icon name="back" size={19} /></IconButton>
				<IconButton aria-label="Aktualisieren"><Icon name="sync" size={19} color="#848484" /></IconButton>
			</TraceTools>
			<SliderLabel htmlFor="trace-opacity">Transparentpause:</SliderLabel>
			<SliderRow>
				<Card $width={26} $dim aria-label="Farbe">
					<Swatch />
					<Icon name="chevRight" size={14} color="#666" />
				</Card>
				<Slider id="trace-opacity" type="range" defaultValue={100} />
				<Card $width={12} $dim aria-label="Mehr"><Icon name="chevRight" size={14} color="#666" /></Card>
			</SliderRow>
			<SliderLabel htmlFor="active-opacity">Aktiv:</SliderLabel>
			<SliderRow>
				<Card $width={26} $dim aria-label="Farben">
					<Wheel viewBox="0 0 12 12">
						<path d="M6 6V0a6 6 0 0 1 5.200 9z" fill="#ef8279" />
						<path d="M6 6l5.200 3A6 6 0 0 1 .8 9z" fill="#6ca5ee" />
						<path d="M6 6 .8 9A6 6 0 0 1 6 0z" fill="#66b98b" />
						<path d="M6 0v6l5.200 3M6 6 .8 9M6 .5a5.500 5.500 0 1 1-.1 0" fill="none" stroke="#777" strokeWidth=".8" />
					</Wheel>
					<Icon name="chevRight" size={14} color="#666" />
				</Card>
				<Slider id="active-opacity" type="range" defaultValue={100} />
				<Spacer $width={12} />
			</SliderRow>
			<BottomTools>
				<IconButton aria-label="Greifen"><Icon name="hand" color="#848484" /></IconButton>
				<IconButton aria-label="Kopieren"><Icon name="copy" color="#848484" size={18} /></IconButton>
				<IconButton aria-label="Teilen"><Icon name="mirrorSplit" color="#848484" size={18} /></IconButton>
				<IconButton aria-label="Schraffuren ausblenden"><Icon name="eyeHatch" color="#848484" size={18} /></IconButton>
			</BottomTools>
		</SidePanel>
	);
}

export default function App() {
	const [tab, setTab] = useState(0);
	const tabs = [
		["storey", "(!) 0. EG [0. EG]"],
		["gableWhite", "[S-01 Schnitt]"],
		["box", "[3D / Auswahl, Geschoss 0]"],
	];
	return (
		<>
			<GlobalStyle />
			<Window>
				<MainToolbar />
				<InfoBox />
				<Workspace>
					<Toolbox />
					<Center>
						<TabBar>
							<Overview aria-label="Übersicht"><Icon name="quad" /></Overview>
							{tabs.map(([icon, name], i) => (
								<Tab key={name} $active={tab === i} onClick={() => setTab(i)}>
									<Icon name={icon} size={18} color={i === 0 ? BLUE : INK} />
									{name}
								</Tab>
							))}
							<TabMenu aria-label="Ansichten">
								<Icon name="houseList" size={16} />
								<Icon name="chevDown" size={16} />
							</TabMenu>
						</TabBar>
						<Canvas>
							<FloorPlan />
						</Canvas>
						<QuickBar>
							<ZoomGroup>
								<IconButton aria-label="Zoom zurück"><Icon name="zoomBack" size={16} /></IconButton>
								<IconButton aria-label="Zoom vor"><Icon name="zoomFwd" size={16} color="#a8a8a8" /></IconButton>
								<IconButton aria-label="Vergrößern"><Icon name="zoomIn" size={16} /></IconButton>
							</ZoomGroup>
							{quickOptions.map(([icon, name]) => (
								<QuickOption key={name}>
									<Icon name={icon} size={16} />
									<span>{name}</span>
									<Icon name="chevRight" size={15} />
								</QuickOption>
							))}
						</QuickBar>
					</Center>
					<Navigator />
				</Workspace>
				<Footer>
					<Icon name="windows" size={18} />
					<Divider />
					<Brand>
						GRAPHISOFT <span>ID</span>
					</Brand>
				</Footer>
			</Window>
		</>
	);
}

const GlobalStyle = createGlobalStyle`
	* {
		box-sizing: border-box;
	}
	body {
		margin: 0;
		background: #e8e8e8;
		overflow: hidden;
	}
	button, input, label {
		font: inherit;
		color: inherit;
	}
	button {
		border: 0;
		padding: 0;
		background: none;
	}
`;
const Window = styled.div`
	display: flex;
	flex-direction: column;
	height: 100vh;
	overflow: hidden;
	background: #e8e8e8;
	color: #222;
	font-family: Roboto, "Liberation Sans", sans-serif;
	font-size: 11px;
`;
const Glyph = styled.svg`
	flex: none;
	fill: none;
	stroke-width: 1.2;
	overflow: visible;
	text {
		font: bold 7px "Liberation Sans", sans-serif;
		fill: ${INK};
		stroke: none;
	}
`;
const raised = css`
	background: #fff;
	border-radius: 4px;
	box-shadow: 0 0 2px rgba(0, 0, 0, 0.25);
`;
const Toolbar = styled.div`
	flex: none;
	display: flex;
	height: 33px;
	background: #e1e1e1;
`;
const Tools = styled.div`
	display: flex;
	align-items: center;
	background: #e8e8e8;
	padding: 0 3px 2px 0;
`;
const Grip = styled.div`
	width: 1px;
	height: 14px;
	margin: 0 4px 0 2px;
	background: #999;
`;
const Separator = styled.div`
	flex: none;
	width: 1px;
	height: 21px;
	margin: 0 4px 0 5px;
	background: #d2d2d2;
`;
const ToolButton = styled.button`
	display: flex;
	align-items: center;
	justify-content: center;
	flex: none;
	width: ${({ $slim, $active }) => ($slim ? ($active ? 12 : 14) : $active ? 26 : 28)}px;
	height: 27px;
	border-radius: 4px;
	${({ $active, $slim }) =>
		$active &&
		css`
			background: #b8b8bf;
			margin: 0 1px 0 ${$slim ? 0 : 1}px;
		`}
`;
const InfoBar = styled.div`
	flex: none;
	display: flex;
	height: 57px;
	overflow: hidden;
`;
const InfoSection = styled.section`
	flex: none;
	display: flex;
	flex-direction: column;
	width: ${({ $first }) => ($first ? 175 : 172)}px;
	margin-left: ${({ $last }) => ($last ? -2 : 0)}px;
	padding: 2px 5px 0 ${({ $first }) => ($first ? 7 : 3)}px;
	border-left: ${({ $first }) => ($first ? 0 : 1)}px solid #cfcfcf;
`;
const InfoTitle = styled.div`
	font-family: Inter, sans-serif;
	font-size: 9px;
	font-weight: 500;
	line-height: 12px;
`;
const InfoBody = styled.div`
	flex: 1;
	display: flex;
	align-items: center;
	gap: 3px;
`;
const Stack = styled.div`
	display: flex;
	flex-direction: column;
	flex: ${({ $grow }) => ($grow ? 1 : "none")};
	min-width: 0;
	gap: ${({ $gap }) => $gap}px;
	margin-left: ${({ $grow }) => ($grow ? 3 : 0)}px;
`;
const Inline = styled.div`
	display: flex;
	gap: 2px;
`;
const Chip = styled.button`
	${raised}
	display: flex;
	align-items: center;
	justify-content: center;
	width: 37px;
	height: 18px;
	${({ $active }) => $active && "background: #b8b8bf; box-shadow: none;"}
`;
const Card = styled.button`
	${raised}
	display: flex;
	align-items: center;
	justify-content: center;
	flex: ${({ $grow }) => ($grow ? 1 : "none")};
	width: ${({ $width }) => ($width ? `${$width}px` : "auto")};
	height: 27px;
	overflow: hidden;
	${({ $dim }) => $dim && "background: #f4f4f4;"}
`;
const Strong = styled.strong`
	flex: 1;
	font-family: Inter, sans-serif;
`;
const AnchorButton = styled.button`
	display: flex;
	align-items: center;
	justify-content: center;
	width: 39px;
	height: 27px;
	border-radius: 4px;
	background: ${({ $active }) => ($active ? "#b8b8bf" : "none")};
`;
const Field = styled.input`
	flex: 1;
	width: 100%;
	min-width: 0;
	height: ${({ $tall }) => ($tall ? 19 : 16)}px;
	flex-basis: ${({ $tall }) => ($tall ? 19 : 16)}px;
	padding: 0 3px;
	border: 0;
	border-bottom: 1px solid #c4c4c4;
	background: #fff;
	line-height: 14px;
`;
const FieldWrap = styled.div`
	position: relative;
	display: flex;
`;
const Highlight = styled.div`
	position: absolute;
	inset: -3px auto -3px -3px;
	width: 41px;
	border: 3px solid ${PINK};
`;
const Choice = styled.div`
	display: flex;
	align-items: center;
	justify-content: space-between;
	height: 13px;
	white-space: nowrap;
`;
const Mini = styled.button`
	${raised}
	display: flex;
	align-items: center;
	justify-content: center;
	width: 12px;
	height: 13px;
`;
const Classified = styled.div`
	flex: 1;
	display: flex;
	align-items: center;
	gap: 4px;
	padding-left: 2px;
`;
const Workspace = styled.div`
	flex: 1;
	display: flex;
	min-height: 0;
`;
const Palette = styled.nav`
	flex: none;
	display: flex;
	flex-direction: column;
	width: 133px;
	padding-right: 1px;
	border-right: 1px solid #dadada;
`;
const PaletteGrip = styled.div`
	flex: none;
	height: ${({ $loose }) => ($loose ? 12 : 6)}px;
	display: flex;
	align-items: center;
	justify-content: center;
	&::before {
		content: "";
		width: ${({ $width }) => $width}px;
		height: 1px;
		background: #9a9a9a;
	}
`;
const PaletteTool = styled.button`
	flex: none;
	display: flex;
	align-items: center;
	height: 26px;
	padding: 0 0 0 10px;
	background: ${({ $active }) => ($active ? "#b3b3ba" : "#f3eeeb")};
	border-radius: ${({ $active }) => ($active ? 5 : 0)}px;
	color: #111;
	text-align: left;
	span {
		flex: 1;
		margin-left: 12px;
		white-space: nowrap;
	}
`;
const PaletteHeader = styled.div`
	flex: none;
	display: flex;
	align-items: center;
	height: ${({ $side }) => ($side ? 20 : 18)}px;
	margin: ${({ $side }) => ($side ? "0 0 0 2px" : "1px 0")};
	padding-left: 5px;
	background: #d0d0d0;
	border-radius: 2px;
	&::before {
		content: "";
		width: 8px;
		height: 7px;
		margin-right: ${({ $side }) => ($side ? 8 : 7)}px;
		background: #868a8d;
		clip-path: ${({ $closed }) => ($closed ? "polygon(0 0, 80% 50%, 0 100%)" : "polygon(0 0, 100% 0, 50% 100%)")};
	}
`;
const Center = styled.main`
	flex: 1;
	display: flex;
	flex-direction: column;
	min-width: 0;
`;
const TabBar = styled.div`
	flex: none;
	display: flex;
	height: 20px;
	background: #dedede;
`;
const Overview = styled.button`
	display: flex;
	align-items: center;
	justify-content: center;
	width: 30px;
	background: #e3e3e3;
`;
const Tab = styled.button`
	display: flex;
	align-items: center;
	justify-content: center;
	gap: 2px;
	width: 278px;
	border-right: 1px solid #a9a9a9;
	background: ${({ $active }) => ($active ? "#fff" : "#e1e1e1")};
	color: #3c3c3c;
`;
const TabMenu = styled.button`
	display: flex;
	align-items: center;
	justify-content: center;
	gap: 6px;
	width: 46px;
	margin-left: auto;
	background: #f5f5f5;
`;
const Canvas = styled.div`
	flex: 1;
	min-height: 0;
	background: #fff;
`;
const Plan = styled.svg`
	display: block;
	width: 100%;
	height: 100%;
`;
const DrawText = styled.text`
	font-family: "Liberation Sans", Arial, sans-serif;
	font-size: ${({ $size }) => $size}px;
`;
const QuickBar = styled.div`
	flex: none;
	display: flex;
	height: 17px;
	border-bottom: 1px solid #dedede;
`;
const ZoomGroup = styled.div`
	display: flex;
	align-items: center;
	justify-content: space-around;
	width: 67px;
`;
const QuickOption = styled.button`
	flex: 1;
	display: flex;
	align-items: center;
	min-width: 0;
	padding: 0 2px 0 4px;
	border-left: 1px solid #d2d2d2;
	span {
		flex: 1;
		margin-left: 6px;
		text-align: center;
		white-space: nowrap;
	}
`;
const IconButton = styled.button`
	display: flex;
	align-items: center;
	justify-content: center;
`;
const SidePanel = styled.aside`
	flex: none;
	display: flex;
	flex-direction: column;
	width: 168px;
	overflow: hidden;
`;
const NavTabs = styled.div`
	flex: none;
	display: flex;
	align-items: center;
	height: 31px;
	padding-left: 3px;
`;
const NavTab = styled.button`
	display: flex;
	align-items: center;
	justify-content: center;
	width: ${({ $active }) => ($active ? 26 : 28)}px;
	height: 27px;
	border-radius: 4px;
	background: ${({ $active }) => ($active ? "#b8b8bf" : "none")};
`;
const MenuButton = styled.button`
	${raised}
	display: flex;
	align-items: center;
	justify-content: space-around;
	width: 32px;
	height: 19px;
	margin-left: auto;
`;
const SearchRow = styled.div`
	flex: none;
	display: flex;
	align-items: center;
	gap: 6px;
	height: 19px;
	margin: 5px 0 3px 3px;
	padding: 0 20px 0 6px;
	background: #fff;
	border-bottom: 1px solid #cfcfcf;
`;
const SearchInput = styled.input`
	flex: 1;
	min-width: 0;
	padding: 0;
	border: 0;
	background: none;
	&::placeholder {
		color: #b3b3b3;
	}
`;
const TreeArea = styled.div`
	flex: 1;
	display: flex;
	min-height: 0;
	border-bottom: 1px solid #cfcfcf;
	background: #f7f7f7;
`;
const TreeList = styled.div`
	flex: 1;
	display: grid;
	grid-template-rows: repeat(19, 1fr) 6px;
	min-width: 0;
	overflow: hidden;
	background: #fff;
	border-right: 1px solid #d9d9d9;
`;
const TreeRow = styled.button`
	display: flex;
	align-items: center;
	min-width: 0;
	padding-left: ${({ $level }) => $level * 13}px;
	background: ${({ $selected }) => ($selected ? "#d5d5d5" : "#fff")};
	font-family: ${({ $selected }) => ($selected ? "Inter, sans-serif" : "inherit")};
	font-weight: ${({ $selected }) => ($selected ? 700 : 400)};
	color: #111;
	white-space: nowrap;
	overflow: hidden;
	&:last-child {
		align-items: flex-start;
	}
	span {
		margin-left: 3px;
	}
`;
const Twist = styled.i`
	display: flex;
	justify-content: center;
	flex: none;
	width: 16px;
`;
const ScrollTrack = styled.div`
	width: 11px;
	padding: 3px 0 0 3px;
`;
const ScrollThumb = styled.div`
	height: 115px;
	border-radius: 4px;
	background: #c1c1c1;
`;
const ScrollTrackH = styled.div`
	flex: none;
	height: 12px;
	padding: 3px;
	background: #f7f7f7;
`;
const ScrollThumbH = styled.div`
	width: 40%;
	height: 7px;
	border-radius: 4px;
	background: #c1c1c1;
`;
const Actions = styled.div`
	flex: none;
	display: flex;
	align-items: center;
	gap: 8px;
	height: 32px;
	padding-left: 6px;
`;
const DescRow = styled.div`
	flex: none;
	display: flex;
	align-items: center;
	height: 25px;
	padding-left: 3px;
	gap: 3px;
	label {
		width: 35px;
	}
`;
const Settings = styled.button`
	${raised}
	flex: none;
	height: 18px;
	margin-left: 3px;
`;
const TraceRow = styled.div`
	flex: none;
	display: flex;
	gap: 2px;
	padding-left: 3px;
`;
const TraceTarget = styled.button`
	${raised}
	flex: 1;
	display: flex;
	align-items: center;
	height: 27px;
	background: #f4f4f4;
	color: #b0b0b0;
	span {
		flex: 1;
		margin-left: 3px;
		text-align: left;
	}
`;
const TraceTools = styled.div`
	flex: none;
	display: flex;
	align-items: center;
	gap: 9px;
	height: 38px;
	padding: 0 3px 4px 6px;
	border-bottom: 1px solid #d2d2d2;
`;
const Spacer = styled.div`
	flex: ${({ $width }) => ($width ? "none" : 1)};
	width: ${({ $width }) => $width || 0}px;
`;
const SliderLabel = styled.label`
	flex: none;
	height: 23px;
	padding-left: 3px;
	line-height: 24px;
	color: #777;
`;
const SliderRow = styled.div`
	flex: none;
	display: flex;
	align-items: flex-start;
	gap: 3px;
	height: 27px;
	padding-left: 3px;
`;
const Slider = styled.input`
	flex: 1;
	min-width: 0;
	height: 22px;
	margin: 0;
	appearance: none;
	background:
		repeating-linear-gradient(90deg, #d2d2d2 0 2px, transparent 2px 13px) center / auto 7px no-repeat,
		linear-gradient(#dcdcdc, #dcdcdc) center / 100% 3px no-repeat;
	&::-webkit-slider-thumb {
		appearance: none;
		width: 8px;
		height: 15px;
		border-radius: 3px;
		background: #f6f6f6;
		box-shadow: 0 0 2px rgba(0, 0, 0, 0.3);
	}
`;
const Swatch = styled.i`
	width: 11px;
	height: 11px;
	background: #fa837c;
`;
const Wheel = styled.svg`
	flex: none;
	width: 12px;
	height: 12px;
`;
const BottomTools = styled.div`
	flex: none;
	display: flex;
	align-items: center;
	justify-content: center;
	gap: 10px;
	height: 35px;
	margin-top: 5px;
	padding-left: 4px;
	border-top: 1px solid #d2d2d2;
`;
const Footer = styled.footer`
	flex: none;
	display: flex;
	align-items: center;
	justify-content: flex-end;
	gap: 8px;
	height: 21px;
	padding-right: 9px;
`;
const Divider = styled.div`
	width: 1px;
	height: 12px;
	background: #999;
`;
const Brand = styled.div`
	margin-left: 3px;
	color: ${INK};
	font-family: Lato, sans-serif;
	font-size: 12px;
	font-weight: 700;
	span {
		font-weight: 400;
	}
`;
